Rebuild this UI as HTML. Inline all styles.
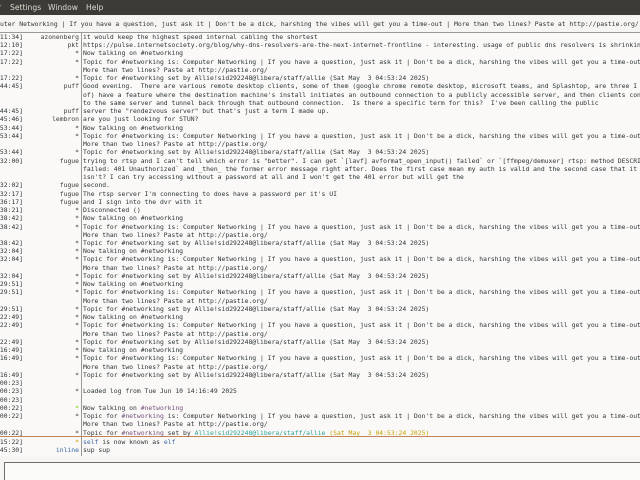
<!DOCTYPE html>
<html><head><meta charset="utf-8"><style>
*{margin:0;padding:0;box-sizing:border-box}
body{width:640px;height:480px;overflow:hidden;background:#f6f5f4;font-family:"DejaVu Sans Mono","Liberation Mono",monospace;position:relative}
#menu{position:absolute;left:0;top:0;width:640px;height:15px;background:#3c3b37;color:#dfdbd2;font-family:"DejaVu Sans","Liberation Sans",sans-serif;font-size:7.6px;line-height:15px}
#menu span{position:absolute;top:0}
#topic{position:absolute;left:0;top:16px;width:640px;height:17px;background:#f6f5f4;border-bottom:1px solid #9a9996;font-size:6.4px;line-height:16px;color:#2e3436;white-space:pre;overflow:hidden}
#log{position:absolute;left:0;top:33px;width:640px;height:423px;background:#faf9f8;overflow:hidden;font-size:6.4px;color:#2e3436}
#sep{position:absolute;left:81px;top:0;width:1px;height:423px;background:#9a9996}
.r{position:absolute;left:0;height:8.24px;line-height:8.24px;width:640px;white-space:pre}
.ts{position:absolute;right:617px;color:#2e3436}
.n{position:absolute;right:561px;color:#3a3a3a}
.m{position:absolute;left:83px;white-space:pre}
.ch{color:#75507b}.hm{color:#2aa198}.dt{color:#c4a000}.bl{color:#3465a4}.gr{color:#73d216}.yl{color:#c4a000}
#mark{position:absolute;left:0;top:403px;width:640px;height:1px;background:#c1835a}
#inp{position:absolute;left:4px;top:462px;width:640px;height:18px;border-top:1px solid #6e6e6e;border-left:1px solid #6e6e6e;background:#fafaf9}
</style></head><body>
<div id="menu"><span style="left:-2px">r</span><span style="left:10px">Settings</span><span style="left:48px">Window</span><span style="left:86px">Help</span></div>
<div id="topic">uter Networking | If you have a question, just ask it | Don't be a dick, harshing the vibes will get you a time-out | More than two lines? Paste at http://pastie.org/</div>
<div id="log">
<div id="sep"></div>
<div id="mark"></div>
<div class="r" style="top:0px"><span class="ts">11:34]</span><span class="n">azonenberg</span><span class="m">it would keep the highest speed internal cabling the shortest</span></div>
<div class="r" style="top:8.24px"><span class="ts">12:10]</span><span class="n">pkt</span><span class="m">https://pulse.internetsociety.org/blog/why-dns-resolvers-are-the-next-internet-frontline - interesting. usage of public dns resolvers is shrinking</span></div>
<div class="r" style="top:16.48px"><span class="ts">17:22]</span><span class="n">*</span><span class="m">Now talking on #networking</span></div>
<div class="r" style="top:24.72px"><span class="ts">17:22]</span><span class="n">*</span><span class="m">Topic for #networking is: Computer Networking | If you have a question, just ask it | Don't be a dick, harshing the vibes will get you a time-out |</span></div>
<div class="r" style="top:32.96px"><span class="m">More than two lines? Paste at http://pastie.org/</span></div>
<div class="r" style="top:41.2px"><span class="ts">17:22]</span><span class="n">*</span><span class="m">Topic for #networking set by Allie!sid292248@libera/staff/allie (Sat May  3 04:53:24 2025)</span></div>
<div class="r" style="top:49.44px"><span class="ts">44:45]</span><span class="n">puff</span><span class="m">Good evening.  There are various remote desktop clients, some of them (google chrome remote desktop, microsoft teams, and Splashtop, are three I k</span></div>
<div class="r" style="top:57.68px"><span class="m">of) have a feature where the destination machine's install initiates an outbound connection to a publicly accessible server, and then clients conn</span></div>
<div class="r" style="top:65.92px"><span class="m">to the same server and tunnel back through that outbound connection.  Is there a specific term for this?  I've been calling the public</span></div>
<div class="r" style="top:74.16px"><span class="ts">44:45]</span><span class="n">puff</span><span class="m">server the "rendezvous server" but that's just a term I made up.</span></div>
<div class="r" style="top:82.4px"><span class="ts">45:46]</span><span class="n">lembron</span><span class="m">are you just looking for STUN?</span></div>
<div class="r" style="top:90.64px"><span class="ts">53:44]</span><span class="n">*</span><span class="m">Now talking on #networking</span></div>
<div class="r" style="top:98.88px"><span class="ts">53:44]</span><span class="n">*</span><span class="m">Topic for #networking is: Computer Networking | If you have a question, just ask it | Don't be a dick, harshing the vibes will get you a time-out |</span></div>
<div class="r" style="top:107.12px"><span class="m">More than two lines? Paste at http://pastie.org/</span></div>
<div class="r" style="top:115.36px"><span class="ts">53:44]</span><span class="n">*</span><span class="m">Topic for #networking set by Allie!sid292248@libera/staff/allie (Sat May  3 04:53:24 2025)</span></div>
<div class="r" style="top:123.6px"><span class="ts">32:00]</span><span class="n">fugue</span><span class="m">trying to rtsp and I can't tell which error is "better". I can get `[lavf] avformat_open_input() failed` or `[ffmpeg/demuxer] rtsp: method DESCRIBE</span></div>
<div class="r" style="top:131.84px"><span class="m">failed: 401 Unauthorized` and _then_ the former error message right after. Does the first case mean my auth is valid and the second case that it</span></div>
<div class="r" style="top:140.08px"><span class="m">isn't? I can try accessing without a password at all and I won't get the 401 error but will get the</span></div>
<div class="r" style="top:148.32px"><span class="ts">32:02]</span><span class="n">fugue</span><span class="m">second.</span></div>
<div class="r" style="top:156.56px"><span class="ts">32:17]</span><span class="n">fugue</span><span class="m">The rtsp server I'm connecting to does have a password per it's UI</span></div>
<div class="r" style="top:164.8px"><span class="ts">36:17]</span><span class="n">fugue</span><span class="m">and I sign into the dvr with it</span></div>
<div class="r" style="top:173.04px"><span class="ts">38:21]</span><span class="n">*</span><span class="m">Disconnected ()</span></div>
<div class="r" style="top:181.28px"><span class="ts">38:42]</span><span class="n">*</span><span class="m">Now talking on #networking</span></div>
<div class="r" style="top:189.52px"><span class="ts">38:42]</span><span class="n">*</span><span class="m">Topic for #networking is: Computer Networking | If you have a question, just ask it | Don't be a dick, harshing the vibes will get you a time-out |</span></div>
<div class="r" style="top:197.76px"><span class="m">More than two lines? Paste at http://pastie.org/</span></div>
<div class="r" style="top:206px"><span class="ts">38:42]</span><span class="n">*</span><span class="m">Topic for #networking set by Allie!sid292248@libera/staff/allie (Sat May  3 04:53:24 2025)</span></div>
<div class="r" style="top:214.24px"><span class="ts">32:04]</span><span class="n">*</span><span class="m">Now talking on #networking</span></div>
<div class="r" style="top:222.48px"><span class="ts">32:04]</span><span class="n">*</span><span class="m">Topic for #networking is: Computer Networking | If you have a question, just ask it | Don't be a dick, harshing the vibes will get you a time-out |</span></div>
<div class="r" style="top:230.72px"><span class="m">More than two lines? Paste at http://pastie.org/</span></div>
<div class="r" style="top:238.96px"><span class="ts">32:04]</span><span class="n">*</span><span class="m">Topic for #networking set by Allie!sid292248@libera/staff/allie (Sat May  3 04:53:24 2025)</span></div>
<div class="r" style="top:247.2px"><span class="ts">29:51]</span><span class="n">*</span><span class="m">Now talking on #networking</span></div>
<div class="r" style="top:255.44px"><span class="ts">29:51]</span><span class="n">*</span><span class="m">Topic for #networking is: Computer Networking | If you have a question, just ask it | Don't be a dick, harshing the vibes will get you a time-out |</span></div>
<div class="r" style="top:263.68px"><span class="m">More than two lines? Paste at http://pastie.org/</span></div>
<div class="r" style="top:271.92px"><span class="ts">29:51]</span><span class="n">*</span><span class="m">Topic for #networking set by Allie!sid292248@libera/staff/allie (Sat May  3 04:53:24 2025)</span></div>
<div class="r" style="top:280.16px"><span class="ts">22:49]</span><span class="n">*</span><span class="m">Now talking on #networking</span></div>
<div class="r" style="top:288.4px"><span class="ts">22:49]</span><span class="n">*</span><span class="m">Topic for #networking is: Computer Networking | If you have a question, just ask it | Don't be a dick, harshing the vibes will get you a time-out |</span></div>
<div class="r" style="top:296.64px"><span class="m">More than two lines? Paste at http://pastie.org/</span></div>
<div class="r" style="top:304.88px"><span class="ts">22:49]</span><span class="n">*</span><span class="m">Topic for #networking set by Allie!sid292248@libera/staff/allie (Sat May  3 04:53:24 2025)</span></div>
<div class="r" style="top:313.12px"><span class="ts">16:49]</span><span class="n">*</span><span class="m">Now talking on #networking</span></div>
<div class="r" style="top:321.36px"><span class="ts">16:49]</span><span class="n">*</span><span class="m">Topic for #networking is: Computer Networking | If you have a question, just ask it | Don't be a dick, harshing the vibes will get you a time-out |</span></div>
<div class="r" style="top:329.6px"><span class="m">More than two lines? Paste at http://pastie.org/</span></div>
<div class="r" style="top:337.84px"><span class="ts">16:49]</span><span class="n">*</span><span class="m">Topic for #networking set by Allie!sid292248@libera/staff/allie (Sat May  3 04:53:24 2025)</span></div>
<div class="r" style="top:346.08px"><span class="ts">00:23]</span></div>
<div class="r" style="top:354.32px"><span class="ts">00:23]</span><span class="n">*</span><span class="m">Loaded log from Tue Jun 10 14:16:49 2025</span></div>
<div class="r" style="top:362.56px"><span class="ts">00:23]</span></div>
<div class="r" style="top:370.8px"><span class="ts">00:22]</span><span class="n gr">*</span><span class="m">Now talking on <span class="ch">#networking</span></span></div>
<div class="r" style="top:379.04px"><span class="ts">00:22]</span><span class="n">*</span><span class="m">Topic for <span class="ch">#networking</span> is: Computer Networking | If you have a question, just ask it | Don't be a dick, harshing the vibes will get you a time-out |</span></div>
<div class="r" style="top:387.28px"><span class="m">More than two lines? Paste at http://pastie.org/</span></div>
<div class="r" style="top:395.52px"><span class="ts">00:22]</span><span class="n">*</span><span class="m">Topic for <span class="ch">#networking</span> set by <span class="hm">Allie!sid292248@libera/staff/allie</span> <span class="dt">(Sat May  3 04:53:24 2025)</span></span></div>
<div class="r" style="top:404.76px"><span class="ts">15:22]</span><span class="n yl">*</span><span class="m"><span class="bl">self</span> is now known as <span class="bl">elf</span></span></div>
<div class="r" style="top:413px"><span class="ts">45:30]</span><span class="n bl">inline</span><span class="m">sup sup</span></div>
</div>
<div id="inp"></div>
</body></html>
